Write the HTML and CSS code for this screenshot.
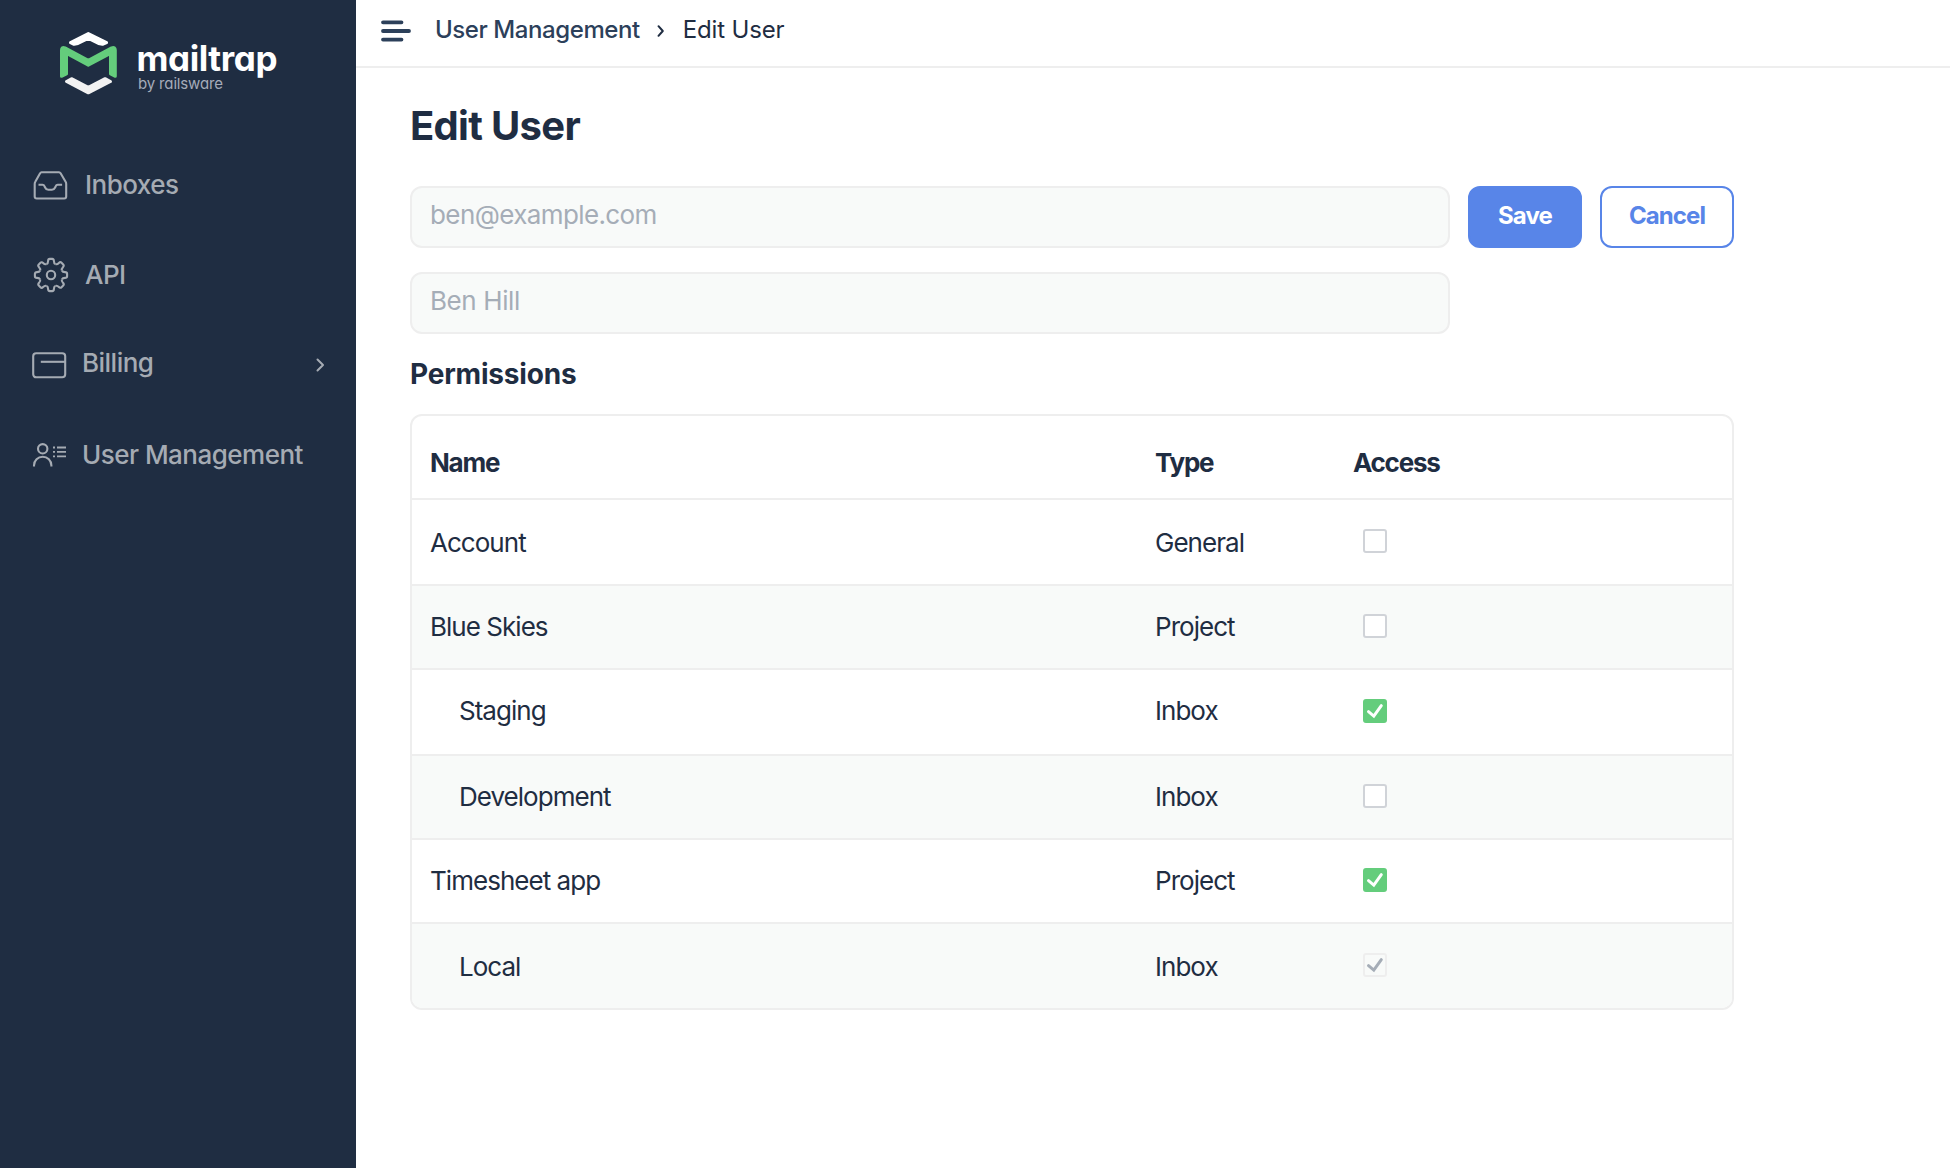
FILE: index.html
```html
<!DOCTYPE html>
<html lang="en">
<head>
<meta charset="utf-8">
<title>Edit User</title>
<link rel="stylesheet" href="styles.css">
</head>
<body>
<div class="app">
  <aside class="sidebar">
    <svg class="logo" width="240" height="80" viewBox="0 0 240 80">
      <g stroke-linejoin="round" stroke-width="3">
        <path fill="#fff" stroke="#fff" d="M30.500 22.600 L48.300 13.500 L66.600 22.600 L62.500 24.300 L58.500 23.500 L48.300 18.500 L38 23.500 L34 24.300Z"/>
        <path fill="#f2f2f2" stroke="#f2f2f2" d="M26.500 61.500 L31.500 58.700 L48.300 67.300 L65.100 58.700 L70.500 61.500 L48.300 72.800Z"/>
        <path fill="#64cd7c" stroke="#64cd7c" d="M21.500 56.300 V30 Q21.500 26.500 25 27.800 L48.300 40.200 L71.600 27.800 Q75.300 26.500 75.300 30 V56.300 L70.500 54 V33.500 L48.300 45.300 L26.500 33.500 V54Z"/>
      </g>
      <text class="logo-name" x="96.500" y="51" textLength="141" lengthAdjust="spacing">mailtrap</text>
      <text class="logo-sub" x="98" y="69" textLength="85" lengthAdjust="spacing">by railsware</text>
    </svg>
    <nav class="nav">
      <a class="nav-item">
        <svg class="icon" viewBox="0 0 40 40"><path d="M11.500 7.200h17.500q1 0 1.600 1l5 8.500q.6 1 .6 2.200v12.600q0 2-2 2h-27.500q-2 0-2-2V18.900q0-1.200.6-2.200l4.800-8.500q.5-1 1.400-1z"/><path d="M8.500 19.700h4q1.400 0 2 1.500l.6 1.300q1 2.200 3.200 2.200h3.600q2.200 0 3.200-2.200l.6-1.300q.6-1.500 2-1.500h4.400"/></svg>
        <span>Inboxes</span>
      </a>
      <a class="nav-item">
        <svg class="icon" viewBox="0 0 40 40">
          <defs><path id="tooth" d="M-4.500-10.900C-3.400-11.400-2.900-12.500-2.900-14Q-2.900-16.100-1.200-16.100H1.200Q2.900-16.100 2.900-14C2.900-12.500 3.400-11.400 4.500-10.900"/></defs>
          <g transform="translate(21 20)"><use href="#tooth"/><use href="#tooth" transform="rotate(45)"/><use href="#tooth" transform="rotate(90)"/><use href="#tooth" transform="rotate(135)"/><use href="#tooth" transform="rotate(180)"/><use href="#tooth" transform="rotate(225)"/><use href="#tooth" transform="rotate(270)"/><use href="#tooth" transform="rotate(315)"/><circle r="4.200"/></g>
        </svg>
        <span>API</span>
      </a>
      <a class="nav-item nav-item-tight nav-item-billing">
        <svg class="icon" viewBox="0 0 40 40"><rect x="3.200" y="8.300" width="32" height="24" rx="3"/><path d="M10.800 16.800H35"/></svg>
        <span>Billing</span>
        <svg class="chevron" width="10" height="16" viewBox="0 0 10 16"><path d="M1.500 2.500l5.500 5.500-5.500 5.500"/></svg>
      </a>
      <a class="nav-item nav-item-tight">
        <svg class="icon" viewBox="0 0 40 40"><circle cx="12.700" cy="13.800" r="4.700"/><path d="M4 31.500V30.500a8.700 8.700 0 0 1 17.400 0V31.500"/><path stroke-width="1.800" d="M23 12.500h2M27 12.500h9M23 16.900h2M27 16.900h9M23 21.400h2M27 21.400h9"/></svg>
        <span>User Management</span>
      </a>
    </nav>
  </aside>
  <main class="main">
    <header class="topbar">
      <svg class="menu" width="32" height="24" viewBox="0 0 32 24"><path d="M2 3.300H20.500M2 12H28M2 20.600H20.500"/></svg>
      <a class="crumb crumb-link">User Management</a>
      <svg class="crumb-sep" width="8" height="14" viewBox="0 0 8 14"><path d="M1.500 2.200l4.300 4.800-4.300 4.800"/></svg>
      <span class="crumb">Edit User</span>
    </header>
    <section class="content">
      <h1 class="title">Edit User</h1>
      <div class="form-row">
        <div class="field">ben@example.com</div>
        <button class="btn btn-primary">Save</button>
        <button class="btn btn-outline">Cancel</button>
      </div>
      <div class="form-row">
        <div class="field">Ben Hill</div>
      </div>
      <h2 class="subtitle">Permissions</h2>
      <div class="table">
        <div class="row row-head"><span>Name</span><span>Type</span><span>Access</span></div>
        <div class="row row-tall row-low"><span>Account</span><span>General</span><i class="check check-low"></i></div>
        <div class="row row-alt"><span>Blue Skies</span><span>Project</span><i class="check"></i></div>
        <div class="row row-tall"><span class="nested">Staging</span><span>Inbox</span><i class="check check-low check-on"><svg viewBox="0 0 24 24"><path d="M5.500 12.700l5.300 4.400 7.500-10.500"/></svg></i></div>
        <div class="row row-alt"><span class="nested">Development</span><span>Inbox</span><i class="check"></i></div>
        <div class="row"><span>Timesheet app</span><span>Project</span><i class="check check-on"><svg viewBox="0 0 24 24"><path d="M5.500 12.700l5.300 4.400 7.500-10.500"/></svg></i></div>
        <div class="row row-alt row-low row-last"><span class="nested">Local</span><span>Inbox</span><i class="check check-low check-disabled"><svg viewBox="0 0 24 24"><path d="M5.500 12.700l5.300 4.400 7.500-10.500"/></svg></i></div>
      </div>
    </section>
  </main>
</div>
</body>
</html>
```
FILE: styles.css
```css
* { box-sizing: border-box; }
body {
  margin: 0;
  background: #fff;
  color: #1f2d42;
  font-family: Inter, "Liberation Sans", sans-serif;
  font-size: 26px;
  line-height: 32px;
}
svg { display: block; fill: none; }
.app { display: flex; height: 1168px; }

.sidebar { width: 356px; flex: none; background: #1f2d42; color: #a5abb3; }
.logo { margin: 20px 0 0 40px; }
.logo-name { font-size: 35px; font-weight: 700; fill: #fff; font-feature-settings: "cv11" 1; }
.logo-sub { font-size: 15px; font-weight: 400; fill: #a5abb9; font-feature-settings: "cv11" 1; }
.nav { margin-top: 40px; }
.nav-item {
  display: flex;
  align-items: center;
  height: 90px;
  padding: 0 30px;
  gap: 15px;
  font-weight: 550;
  letter-spacing: -0.52px;
}
.nav-item-tight { gap: 12px; }
.nav-item-billing span { margin-bottom: 4px; }
.icon { width: 40px; height: 40px; flex: none; stroke: #a5abb3; stroke-width: 2.1; stroke-linejoin: round; }
.chevron { margin-left: auto; stroke: #a5abb3; stroke-width: 2; stroke-linecap: round; stroke-linejoin: round; }

.main { flex: 1; }
.topbar {
  display: flex;
  align-items: center;
  height: 68px;
  padding: 0 0 6px 24px;
  border-bottom: 2px solid #eee;
  font-size: 24px;
}
.menu { stroke: #2c405a; stroke-width: 3.8; stroke-linecap: round; margin: 2px 22px 0 1px; }
.crumb { letter-spacing: -0.15px; }
.crumb-link { color: #2c405a; font-weight: 550; letter-spacing: -0.42px; }
.crumb-sep { margin: 2px 18px 0 17px; stroke: #1f2d42; stroke-width: 2; stroke-linecap: round; stroke-linejoin: round; }

.content { width: 1378px; padding: 33px 0 0 54px; }
.title { margin: 0 0 35px; font-size: 40px; line-height: 50px; font-weight: 680; letter-spacing: -0.7px; }
.form-row { display: flex; gap: 18px; height: 62px; margin-bottom: 24px; }
.field {
  width: 1040px;
  padding: 11px 18px;
  border: 2px solid #eee;
  border-radius: 12px;
  background: #f8faf9;
  color: #a5adb7;
  letter-spacing: -0.6px;
}
.form-row + .form-row .field { letter-spacing: -0.4px; }
.form-row + .form-row { margin-bottom: 23px; }
.btn {
  width: 114px;
  padding: 0 0 2px;
  border: 2px solid #5885e8;
  border-radius: 12px;
  font-family: inherit;
  font-size: 24px;
  line-height: 30px;
  font-weight: 700;
  letter-spacing: -0.9px;
}
.btn-primary { background: #5885e8; color: #fff; }
.btn-outline { width: 134px; background: #fff; color: #5885e8; }
.subtitle { margin: 0 0 23px; font-size: 28px; line-height: 34px; font-weight: 650; letter-spacing: -0.2px; }

.table { border: 2px solid #eee; border-radius: 12px; overflow: hidden; letter-spacing: -0.97px; }
.row {
  display: grid;
  grid-template-columns: 725px 198px 1fr;
  height: 84px;
  padding: 25px 0 0 18px;
  border-bottom: 2px solid #eee;
}
.row-head { padding-top: 31px; font-weight: 650; letter-spacing: -1.25px; }
.row-tall { height: 86px; }
.row-low { padding-top: 27px; }
.row-alt { background: #f8faf9; }
.row-last { border-bottom: 0; }
.nested { padding-left: 29px; }
.check {
  width: 24px;
  height: 24px;
  margin: 3px 0 0 10px;
  border: 2px solid #d0d3d8;
  border-radius: 3px;
  background: #fff;
}
.check svg { width: 24px; height: 24px; margin: -2px; stroke: #fff; stroke-width: 3; stroke-linecap: round; stroke-linejoin: miter; }
.check-low { margin-top: 4px; }
.row-low .check-low { margin-top: 2px; }
.check-on { border-color: #64cd7c; background: #64cd7c; }
.check-disabled { border-color: #eee; background: #f8faf9; }
.check-disabled svg { stroke: #a5adb7; }
```
